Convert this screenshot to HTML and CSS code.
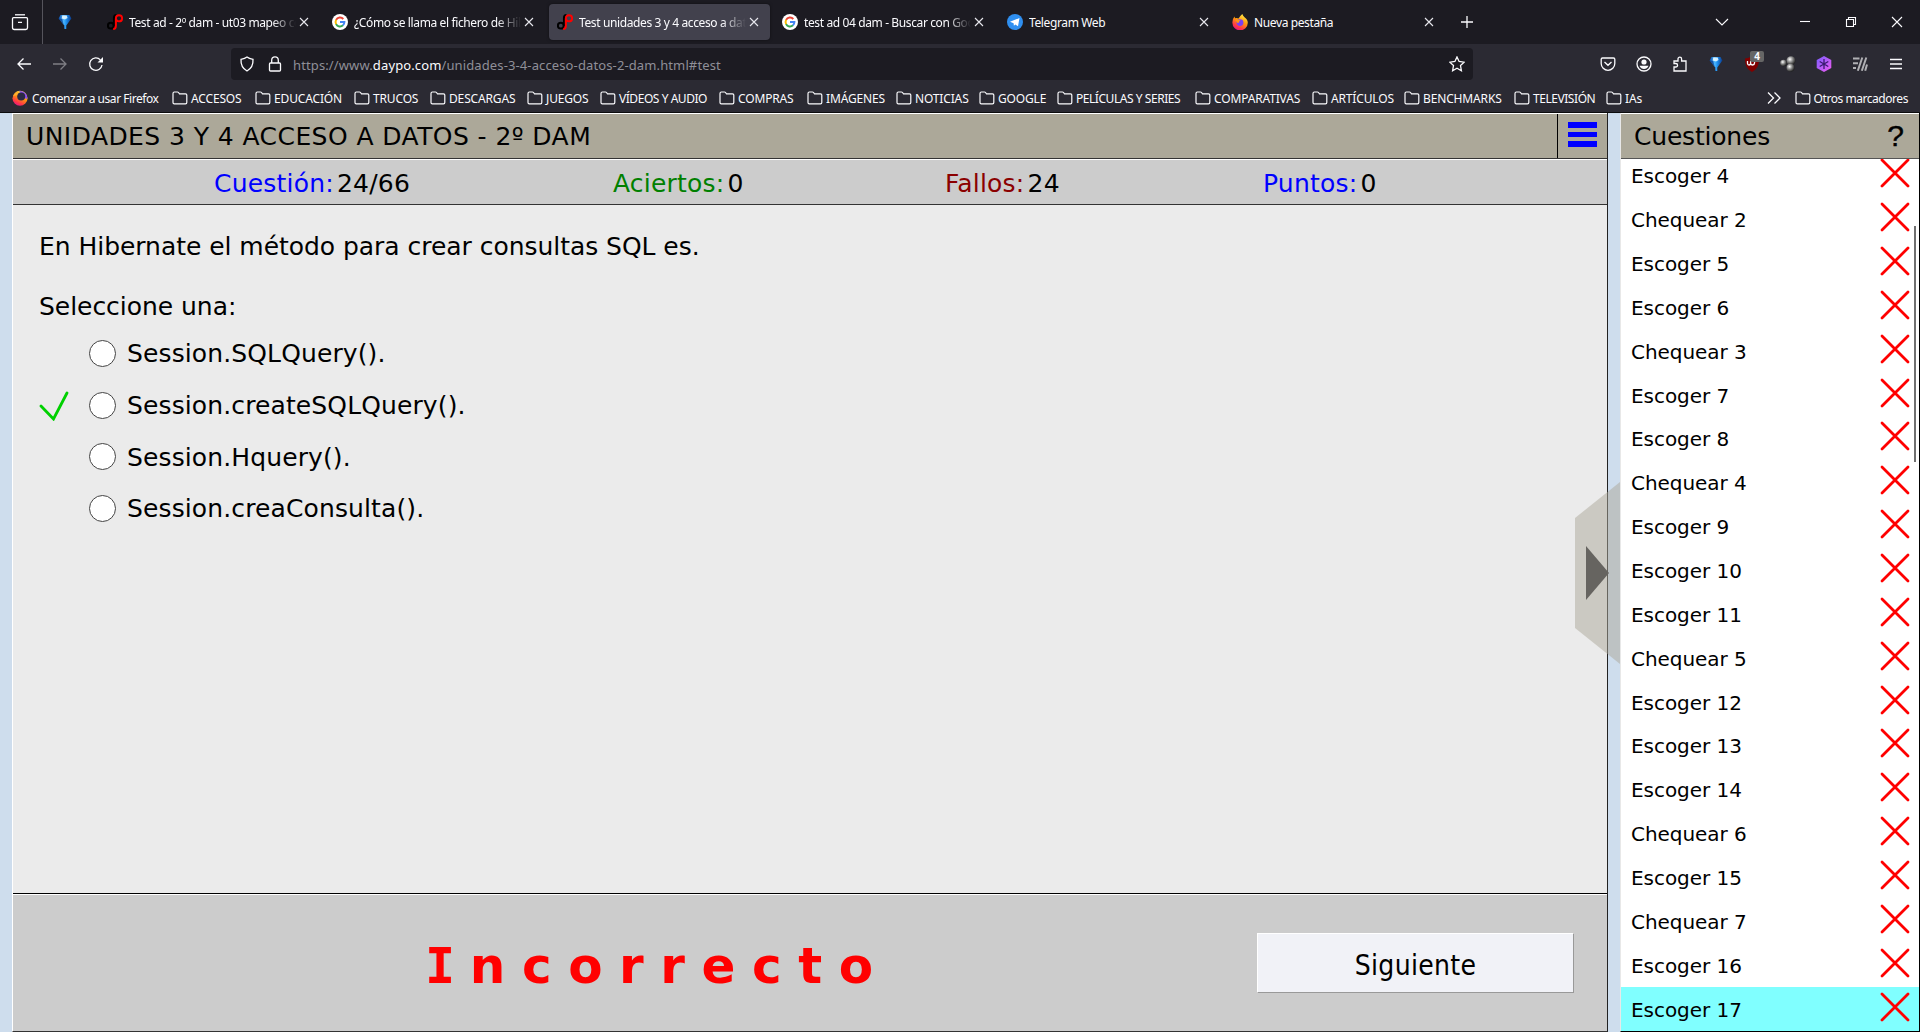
FILE: index.html
```html
<!DOCTYPE html>
<html lang="es">
<head>
<meta charset="utf-8">
<title>Unidades 3 y 4 acceso a datos - 2º DAM</title>
<link rel="stylesheet" href="styles.css">
</head>
<body>
<svg class="defs" width="0" height="0">
  <defs>
    <linearGradient id="g-gem" x1="0" y1="0" x2="1" y2="0"><stop offset="0" stop-color="#0a4aa8"/><stop offset=".4" stop-color="#4db8ff"/><stop offset=".6" stop-color="#1e90f0"/><stop offset="1" stop-color="#0a3a8c"/></linearGradient>
    <linearGradient id="g-fox" x1=".8" y1="0" x2=".3" y2="1"><stop offset="0" stop-color="#fff44f"/><stop offset=".45" stop-color="#ff980e"/><stop offset=".8" stop-color="#ff3647"/><stop offset="1" stop-color="#e31587"/></linearGradient>
    <linearGradient id="g-hex" x1="0" y1="0" x2="1" y2="1"><stop offset="0" stop-color="#7a5cff"/><stop offset="1" stop-color="#f05cf0"/></linearGradient>
    <radialGradient id="g-ball" cx=".38" cy=".35" r=".65"><stop offset="0" stop-color="#fff"/><stop offset=".5" stop-color="#888"/><stop offset="1" stop-color="#222"/></radialGradient>
    <symbol id="i-gem" viewBox="0 0 16 16"><path d="M3.500 1h9l1.900 3.500L9.300 11.500V15H7.300v-3.500L1.600 4.500z" fill="url(#g-gem)"/><path d="M5.200 1.500h4.500L10.500 4 8 5.500 4.800 4.500z" fill="#e6f8ff" opacity=".9"/><path d="M1.600 4.500 5 5 8 15H7.300v-3.500z" fill="#0b3f92" opacity=".7"/></symbol>
    <symbol id="i-daypo" viewBox="0 0 16 16"><circle cx="3.800" cy="11.700" r="2.900" fill="none" stroke="#000" stroke-width="2"/><path d="M6.900 12V4.200Q6.900 1 9.500 1" fill="none" stroke="#000" stroke-width="1.900"/><circle cx="12" cy="4.300" r="3.100" fill="none" stroke="#f00" stroke-width="1.900"/><path d="M8.900 4.500V11.500Q8.900 15 6.200 15" fill="none" stroke="#f00" stroke-width="2"/></symbol>
    <symbol id="i-google" viewBox="0 0 16 16"><circle cx="8" cy="8" r="8" fill="#fff"/><g fill="none" stroke-width="2"><path d="M11.300 5A4.400 4.400 0 0 0 4.100 5.900" stroke="#ea4335"/><path d="M4.200 5.700a4.600 4.600 0 0 0 0 4.600" stroke="#fbbc05"/><path d="M4.100 10.100a4.400 4.400 0 0 0 6.900 1.200" stroke="#34a853"/><path d="M8 8h4.400a4.400 4.400 0 0 1-1.500 3.300" stroke="#4285f4"/></g></symbol>
    <symbol id="i-telegram" viewBox="0 0 16 16"><circle cx="8" cy="8" r="8" fill="#2f8ff0"/><path d="M3 7.800 12.500 4 11 12.300 8.300 10.400 6.900 11.700 6.600 9.300z" fill="#fff"/></symbol>
    <symbol id="i-firefox" viewBox="0 0 16 16"><path d="M10.300 0q.7 2 2.200 3.200Q15.800 5.500 15.800 8.800A7.600 7.600 0 0 1 .4 8.500Q.3 5 2.500 2.500L3 4.300q1.800-.6 3.500.3Q8 2 10.300 0z" fill="url(#g-fox)"/><circle cx="8" cy="8.600" r="3.400" fill="#7b3ff2"/><path d="M3.300 6.300q2.200-1.300 5.200.2Q6.800 7 7 8.600 5 9.500 5 8z" fill="#ff980e"/></symbol>
    <symbol id="i-firefox-ring" viewBox="0 0 16 16"><circle cx="8" cy="8.300" r="7.500" fill="url(#g-fox)"/><path d="M7 1.200A7.200 7.200 0 0 1 15.500 8q-1.800 2-2.500-.5z" fill="#8a4bf0"/><circle cx="9.200" cy="6.500" r="4" fill="#2b2a45"/><path d="M1 6q2.500-4 5-4.500L5.200 5z" fill="#ffb030"/></symbol>
    <symbol id="i-folder" viewBox="0 0 16 16"><path d="M1 3.400Q1 2 2.400 2h3q.7 0 1.100.5l1 1.300h6q1.300 0 1.300 1.300v7.400q0 1.300-1.300 1.300H2.300Q1 13.800 1 12.500z" fill="none" stroke="#fbfbfe" stroke-width="1.200"/></symbol>
    <symbol id="i-close" viewBox="0 0 16 16"><path d="M4 4l8 8M12 4l-8 8" stroke="#e8e8ee" stroke-width="1.100" fill="none"/></symbol>
    <symbol id="i-x" viewBox="0 0 30 30"><path d="M2 2 28 28M28 2 2 28" stroke="#f00" stroke-width="2.800" stroke-linecap="round"/></symbol>
  </defs>
</svg>

<div class="browser">
  <div class="tabstrip">
    <div class="view-button"><svg width="18" height="18" viewBox="0 0 18 18"><path d="M4 1.800h10" /><path d="M2.500 4.700h13q1 0 1 1v9q0 1.800-1.800 1.800H3.300q-1.800 0-1.800-1.800v-9q0-1 1-1zM7 9.300h4"/></svg></div>
    <div class="pinned"><svg width="16" height="16"><use href="#i-gem"/></svg></div>
    <div class="tab"><svg width="16" height="16"><use href="#i-daypo"/></svg><span class="label fade">Test ad - 2º dam - ut03 mapeo con</span><svg class="close" width="16" height="16"><use href="#i-close"/></svg></div>
    <div class="tab"><svg width="16" height="16"><use href="#i-google"/></svg><span class="label fade">¿Cómo se llama el fichero de Hibernate</span><svg class="close" width="16" height="16"><use href="#i-close"/></svg></div>
    <div class="tab active"><svg width="16" height="16"><use href="#i-daypo"/></svg><span class="label fade">Test unidades 3 y 4 acceso a datos</span><svg class="close" width="16" height="16"><use href="#i-close"/></svg></div>
    <div class="tab"><svg width="16" height="16"><use href="#i-google"/></svg><span class="label fade">test ad 04 dam - Buscar con Google</span><svg class="close" width="16" height="16"><use href="#i-close"/></svg></div>
    <div class="tab"><svg width="16" height="16"><use href="#i-telegram"/></svg><span class="label">Telegram Web</span><svg class="close" width="16" height="16"><use href="#i-close"/></svg></div>
    <div class="tab"><svg width="16" height="16"><use href="#i-firefox"/></svg><span class="label">Nueva pestaña</span><svg class="close" width="16" height="16"><use href="#i-close"/></svg></div>
    <svg class="new-tab" width="16" height="16" viewBox="0 0 16 16"><path d="M8 2v12M2 8h12"/></svg>
    <div class="window-controls">
      <svg width="16" height="16" viewBox="0 0 16 16"><path d="M2 5l6 6 6-6"/></svg>
      <svg class="minimize" width="16" height="16" viewBox="0 0 16 16"><path d="M3 7.500h10"/></svg>
      <svg width="16" height="16" viewBox="0 0 16 16"><path d="M3.500 5.500h7v7h-7zM5.500 5V3.500h7v7H11"/></svg>
      <svg width="16" height="16" viewBox="0 0 16 16"><path d="M3 3l10 10M13 3 3 13"/></svg>
    </div>
  </div>

  <div class="navbar">
    <div class="nav-buttons">
      <svg width="16" height="16" viewBox="0 0 16 16"><path d="M15 8H2M7.500 2.500 2 8l5.500 5.500"/></svg>
      <svg class="disabled" width="16" height="16" viewBox="0 0 16 16"><path d="M1 8h13M8.500 2.500 14 8l-5.500 5.500"/></svg>
      <svg width="16" height="16" viewBox="0 0 16 16"><path d="M14 9A6.200 6.200 0 1 1 12.400 3.900"/><path class="solid" d="M15 1v5.500H9.500z"/></svg>
    </div>
    <div class="urlbar">
      <svg width="16" height="16" viewBox="0 0 16 16"><path d="M8 1Q10 2.600 14 3.300 14.500 11.500 8 15 1.500 11.500 2 3.300 6 2.600 8 1z"/></svg>
      <svg width="16" height="16" viewBox="0 0 16 16"><path d="M4.700 7V4.200a3.300 3.300 0 0 1 6.600 0V7M3.500 7h9q1 0 1 1v6q0 1-1 1h-9q-1 0-1-1V8q0-1 1-1z"/></svg>
      <span class="url">https://www.<b>daypo.com</b>/unidades-3-4-acceso-datos-2-dam.html#test</span>
      <svg class="star" width="16" height="16" viewBox="0 0 16 16"><path d="M8 .9 10.100 5.500 15.200 6.200 11.500 9.600 12.400 14.700 8 12.200 3.600 14.700 4.500 9.600.8 6.200 5.900 5.500z"/></svg>
    </div>
    <div class="extensions">
      <svg width="16" height="16" viewBox="0 0 16 16"><path d="M2.500 2h11q1.300 0 1.300 1.300V7.500a6.800 6.800 0 0 1-13.600 0V3.300Q1.200 2 2.500 2zM4.500 6 8 9.300 11.500 6"/></svg>
      <svg width="16" height="16" viewBox="0 0 16 16"><circle cx="8" cy="8" r="7"/><circle class="solid" cx="8" cy="6" r="2.600"/><path class="solid" d="M3.500 9.800h9Q11 13 8 13T3.500 9.800z"/></svg>
      <svg width="16" height="16" viewBox="0 0 16 16"><path d="M2 15V11h1.800a1.700 1.700 0 0 0 0-3.500H2V5h4V3a1.800 1.800 0 0 1 3.600 0v2H14v10z"/></svg>
      <svg class="gem" width="16" height="16"><use href="#i-gem"/></svg>
      <div class="ublock"><svg width="16" height="16" viewBox="0 0 16 16"><path d="M8 0q3 2.300 7 2.500Q15.500 12 8 16 .5 12 1 2.500 5 2.300 8 0z" fill="#800000" stroke="none"/><path d="M3.500 5v2.500Q3.700 9 5 9t1.600-1.500V5M6.600 7.500q.5 1.500 2 1.500 2-.2 2-2.200T8.500 5"/></svg><span class="count">4</span></div>
      <svg width="16" height="16" viewBox="0 0 16 16"><g fill="url(#g-ball)" stroke="none"><circle cx="11" cy="4.700" r="4.500"/><circle cx="3.500" cy="7" r="3.300"/><circle cx="10.500" cy="11.800" r="4"/></g></svg>
      <svg width="16" height="16" viewBox="0 0 16 16"><path d="M8 0l7.300 4v8L8 16 .7 12V4z" fill="url(#g-hex)" stroke="none"/><path d="M8 3v10M3.700 5.500l8.600 5M12.300 5.500l-8.600 5" stroke="#3a1a70"/></svg>
      <svg class="stripes" width="16" height="16" viewBox="0 0 16 16"><path d="M1 2.500h6.500M1 7.200h5M1 12h3"/><path d="M10.300 1.500 5.800 14.800M14.300 1.500 9.800 14.800M15 8.500l-1.800 6.300"/></svg>
      <svg width="16" height="16" viewBox="0 0 16 16"><path d="M2 3.500h12M2 8h12M2 12.500h12"/></svg>
    </div>
  </div>

  <div class="bookmarks">
    <div class="bm tight first" style="width:160px"><svg width="16" height="16"><use href="#i-firefox-ring"/></svg>Comenzar a usar Firefox</div>
    <div class="bm" style="width:83px"><svg width="16" height="16"><use href="#i-folder"/></svg>ACCESOS</div>
    <div class="bm" style="width:99px"><svg width="16" height="16"><use href="#i-folder"/></svg>EDUCACIÓN</div>
    <div class="bm" style="width:76px"><svg width="16" height="16"><use href="#i-folder"/></svg>TRUCOS</div>
    <div class="bm" style="width:97px"><svg width="16" height="16"><use href="#i-folder"/></svg>DESCARGAS</div>
    <div class="bm" style="width:73px"><svg width="16" height="16"><use href="#i-folder"/></svg>JUEGOS</div>
    <div class="bm tight" style="width:119px"><svg width="16" height="16"><use href="#i-folder"/></svg>VÍDEOS Y AUDIO</div>
    <div class="bm" style="width:88px"><svg width="16" height="16"><use href="#i-folder"/></svg>COMPRAS</div>
    <div class="bm" style="width:89px"><svg width="16" height="16"><use href="#i-folder"/></svg>IMÁGENES</div>
    <div class="bm" style="width:83px"><svg width="16" height="16"><use href="#i-folder"/></svg>NOTICIAS</div>
    <div class="bm" style="width:78px"><svg width="16" height="16"><use href="#i-folder"/></svg>GOOGLE</div>
    <div class="bm tight" style="width:138px"><svg width="16" height="16"><use href="#i-folder"/></svg>PELÍCULAS Y SERIES</div>
    <div class="bm" style="width:117px"><svg width="16" height="16"><use href="#i-folder"/></svg>COMPARATIVAS</div>
    <div class="bm" style="width:92px"><svg width="16" height="16"><use href="#i-folder"/></svg>ARTÍCULOS</div>
    <div class="bm" style="width:110px"><svg width="16" height="16"><use href="#i-folder"/></svg>BENCHMARKS</div>
    <div class="bm tight" style="width:92px"><svg width="16" height="16"><use href="#i-folder"/></svg>TELEVISIÓN</div>
    <div class="bm" style="width:40px"><svg width="16" height="16"><use href="#i-folder"/></svg>IAs</div>
    <svg class="overflow" width="16" height="16" viewBox="0 0 16 16"><path d="M2 2.500 7.500 8 2 13.500M8.500 2.500 14 8l-5.500 5.500"/></svg>
    <div class="bm tight"><svg width="16" height="16"><use href="#i-folder"/></svg>Otros marcadores</div>
  </div>
</div>

<div class="page">
  <main class="quiz">
    <header class="quiz-header"><h1>UNIDADES 3 Y 4 ACCESO A DATOS - 2º DAM</h1><div class="menu"><i></i><i></i><i></i></div></header>
    <div class="stats">
      <div><span class="blue">Cuestión:</span> 24/66</div>
      <div><span class="green">Aciertos:</span> 0</div>
      <div><span class="maroon">Fallos:</span> 24</div>
      <div><span class="blue">Puntos:</span> 0</div>
    </div>
    <section class="question">
      <p class="prompt">En Hibernate el método para crear consultas SQL es.</p>
      <p class="instruction">Seleccione una:</p>
      <div class="option"><span class="mark"></span><span class="radio"></span>Session.SQLQuery().</div>
      <div class="option"><span class="mark"><svg width="30" height="30" viewBox="0 0 30 30"><path d="M2 15 14.500 28 28 2" fill="none" stroke="#00d000" stroke-width="2.800" stroke-linecap="round"/></svg></span><span class="radio"></span>Session.createSQLQuery().</div>
      <div class="option"><span class="mark"></span><span class="radio"></span>Session.Hquery().</div>
      <div class="option"><span class="mark"></span><span class="radio"></span>Session.creaConsulta().</div>
    </section>
    <footer class="result">
      <div class="verdict"><span class="cap">I</span>ncorrecto</div>
      <button class="next">Siguiente</button>
    </footer>
  </main>
  <svg class="handle" width="45" height="182" viewBox="0 0 45 182"><path d="M0 36 45 0V182L0 146z" fill="#aca899" fill-opacity=".5"/><path d="M11 64 34 91 11 118z" fill="#666460"/></svg>
  <aside class="list">
    <header class="list-header"><h2>Cuestiones</h2><span class="help">?</span></header>
    <div class="rows">
      <div class="row">Escoger 4<svg width="30" height="30"><use href="#i-x"/></svg></div>
      <div class="row">Chequear 2<svg width="30" height="30"><use href="#i-x"/></svg></div>
      <div class="row">Escoger 5<svg width="30" height="30"><use href="#i-x"/></svg></div>
      <div class="row">Escoger 6<svg width="30" height="30"><use href="#i-x"/></svg></div>
      <div class="row">Chequear 3<svg width="30" height="30"><use href="#i-x"/></svg></div>
      <div class="row">Escoger 7<svg width="30" height="30"><use href="#i-x"/></svg></div>
      <div class="row">Escoger 8<svg width="30" height="30"><use href="#i-x"/></svg></div>
      <div class="row">Chequear 4<svg width="30" height="30"><use href="#i-x"/></svg></div>
      <div class="row">Escoger 9<svg width="30" height="30"><use href="#i-x"/></svg></div>
      <div class="row">Escoger 10<svg width="30" height="30"><use href="#i-x"/></svg></div>
      <div class="row">Escoger 11<svg width="30" height="30"><use href="#i-x"/></svg></div>
      <div class="row">Chequear 5<svg width="30" height="30"><use href="#i-x"/></svg></div>
      <div class="row">Escoger 12<svg width="30" height="30"><use href="#i-x"/></svg></div>
      <div class="row">Escoger 13<svg width="30" height="30"><use href="#i-x"/></svg></div>
      <div class="row">Escoger 14<svg width="30" height="30"><use href="#i-x"/></svg></div>
      <div class="row">Chequear 6<svg width="30" height="30"><use href="#i-x"/></svg></div>
      <div class="row">Escoger 15<svg width="30" height="30"><use href="#i-x"/></svg></div>
      <div class="row">Chequear 7<svg width="30" height="30"><use href="#i-x"/></svg></div>
      <div class="row">Escoger 16<svg width="30" height="30"><use href="#i-x"/></svg></div>
      <div class="row current">Escoger 17<svg width="30" height="30"><use href="#i-x"/></svg></div>
    </div>
    <div class="scrollbar"></div>
  </aside>
</div>
</body>
</html>
```
FILE: styles.css
```css
* { box-sizing: border-box; }
html, body { height: 100%; margin: 0; }
body {
  display: flex;
  flex-direction: column;
  overflow: hidden;
  background: #cedded;
  color: #000;
  font-family: "DejaVu Sans", Verdana, sans-serif;
  font-size: 25px;
}
svg { flex: none; display: block; }
h1, h2, p { margin: 0; font-size: 25px; font-weight: normal; }
.defs { position: absolute; }

/* Browser chrome */
.browser {
  flex: none;
  height: 113px;
  background: #2b2a33;
  border-bottom: 1px solid #0c0c0d;
  color: #fbfbfe;
  font: 12px "Noto Sans", "Segoe UI", sans-serif;
  white-space: nowrap;
}
.view-button svg, .new-tab, .window-controls svg, .nav-buttons svg,
.urlbar svg, .extensions svg, .overflow {
  fill: none;
  stroke: #fbfbfe;
  stroke-width: 1.3;
}
.browser .solid { fill: #fbfbfe; stroke: none; }
.extensions .gem { stroke: none; }
.extensions .stripes { stroke: #b0b0b4; stroke-width: 2; }

.tabstrip { display: flex; align-items: center; height: 44px; background: #1c1b22; }
.view-button {
  display: flex;
  align-items: center;
  width: 43px;
  height: 44px;
  padding-left: 11px;
  border-right: 1px solid #55545c;
}
.pinned { width: 56px; padding-left: 14px; }
.tab {
  display: flex;
  align-items: center;
  width: 221px;
  height: 36px;
  margin-right: 4px;
  padding: 0 8px;
  border-radius: 4px;
  letter-spacing: -.38px;
}
.tab.active { background: #42414d; box-shadow: 0 0 3px rgba(0, 0, 0, .5); }
.label { width: 167px; margin-left: 6px; overflow: hidden; }
.fade { -webkit-mask-image: linear-gradient(to left, transparent, #000 24px); mask-image: linear-gradient(to left, transparent, #000 24px); }
.new-tab { margin-left: 10px; }
.window-controls { display: flex; gap: 30px; margin-left: auto; padding-right: 15px; }
.window-controls svg { stroke-width: 1.1; }
.minimize { margin-left: 37px; }

.navbar { display: flex; align-items: center; height: 40px; }
.nav-buttons { display: flex; gap: 20px; width: 231px; padding-left: 16px; }
.disabled { opacity: .4; }
.urlbar {
  display: flex;
  align-items: center;
  width: 1242px;
  height: 32px;
  padding: 0 8px;
  border-radius: 4px;
  background: #1c1b22;
}
.urlbar svg + svg { margin-left: 12px; }
.url { margin: 2px 0 0 10px; color: #8f8f98; font-size: 13px; letter-spacing: .12px; }
.url b { color: #fbfbfe; font-weight: normal; }
.urlbar .star { margin-left: auto; }
.extensions { display: flex; gap: 20px; margin-left: auto; padding-right: 16px; }
.ublock { position: relative; }
.count {
  position: absolute;
  left: 6px;
  top: -5px;
  width: 14px;
  height: 11px;
  border-radius: 2px;
  background: #666;
  font: bold 10px/11px "Noto Sans", sans-serif;
  text-align: center;
}

.bookmarks { display: flex; align-items: center; height: 28px; padding: 0 12px; }
.bm { display: flex; align-items: center; gap: 3px; flex: none; letter-spacing: -.15px; }
.tight { letter-spacing: -.45px; }
.first { gap: 4px; }
.overflow { margin: 0 13px 0 auto; }

/* Quiz page */
.page { position: relative; flex: 1; display: flex; padding-left: 12px; min-height: 0; }
.quiz {
  display: flex;
  flex-direction: column;
  width: 1596px;
  border-left: 1px solid #fff;
  border-right: 1px solid #222;
  border-bottom: 1px solid #333;
}
.quiz-header {
  display: flex;
  justify-content: space-between;
  height: 46px;
  border-top: 1px solid #fff;
  border-bottom: 1px solid #333;
  background: #aca899;
  line-height: 46px;
}
.quiz-header h1 { padding-left: 13px; letter-spacing: .43px; }
.menu {
  display: flex;
  flex-direction: column;
  gap: 4px;
  width: 50px;
  padding: 8px 0 0 10px;
  border-left: 1px solid #000;
}
.menu i { width: 29px; height: 5.500px; background: #00f; }
.stats {
  display: grid;
  grid-template-columns: 399px 332px 318px 1fr;
  height: 46px;
  padding: 1px 0 0 201px;
  border-top: 1px solid #fff;
  border-bottom: 1px solid #333;
  background: #ccc;
  line-height: 46px;
  letter-spacing: .2px;
  word-spacing: -5px;
}
.blue { color: #00f; }
.green { color: #008000; }
.maroon { color: #8b0000; }
.question {
  flex: 1;
  padding: 22px 0 0 26px;
  border-bottom: 1px solid #000;
  background: #ebebeb;
}
.prompt { line-height: 40px; letter-spacing: -.04px; }
.instruction { margin-top: 20px; line-height: 40px; letter-spacing: -.04px; }
.option { display: flex; align-items: center; height: 51.700px; letter-spacing: .12px; }
.instruction + .option { margin-top: 1px; }
.mark { width: 30px; }
.radio {
  width: 27px;
  height: 27px;
  margin: -1px 11px 0 20px;
  border: 1.500px solid #444;
  border-radius: 50%;
  background: #fff;
}
.result {
  display: flex;
  height: 137px;
  align-items: center;
  justify-content: space-between;
  padding: 0 33px 0 412px;
  border-top: 1px solid #fff;
  background: #ccc;
}
.verdict { color: #f00; font-size: 50px; font-weight: bold; letter-spacing: 16.600px; padding-top: 5px; }
.cap { font-family: "DejaVu Sans Mono", monospace; margin-right: -2px; }
.next {
  width: 317px;
  height: 60px;
  padding: 4px 0 0;
  border: 1px solid;
  border-color: #fff #999 #999 #fff;
  background: #f1f2f7;
  color: #000;
  font: 28px "DejaVu Sans Condensed", "DejaVu Sans", Tahoma, sans-serif;
  font-stretch: condensed;
  letter-spacing: .3px;
}

/* Question list */
.handle { position: absolute; left: 1575px; top: 369px; }
.list {
  position: relative;
  display: flex;
  flex-direction: column;
  width: 300px;
  margin-left: 12px;
  border-left: 1px solid #e8e8e8;
  border-right: 1px solid #000;
  border-bottom: 1px solid #000;
  background: #fff;
}
.list-header {
  flex: none;
  display: flex;
  justify-content: space-between;
  height: 46px;
  padding: 0 15px 0 13px;
  border-top: 1px solid #fff;
  border-bottom: 1px solid #555;
  background: #aca899;
  line-height: 46px;
}
.list-header h2 { letter-spacing: -.2px; }
.help { font: 30px/43px "Liberation Sans", Arial, sans-serif; -webkit-text-stroke: .4px #000; }
.rows { flex: 1; display: flex; flex-direction: column; justify-content: flex-end; overflow: hidden; }
.row {
  flex: none;
  display: flex;
  justify-content: space-between;
  align-items: center;
  height: 43.860px;
  padding: 1px 9px 0 10px;
  font-size: 20px;
  letter-spacing: -.05px;
}
.row svg { margin-top: -6px; }
.current { background: #80ffff; }
.scrollbar { position: absolute; right: 3px; top: 113px; width: 2px; height: 236px; background: #707070; }
```
